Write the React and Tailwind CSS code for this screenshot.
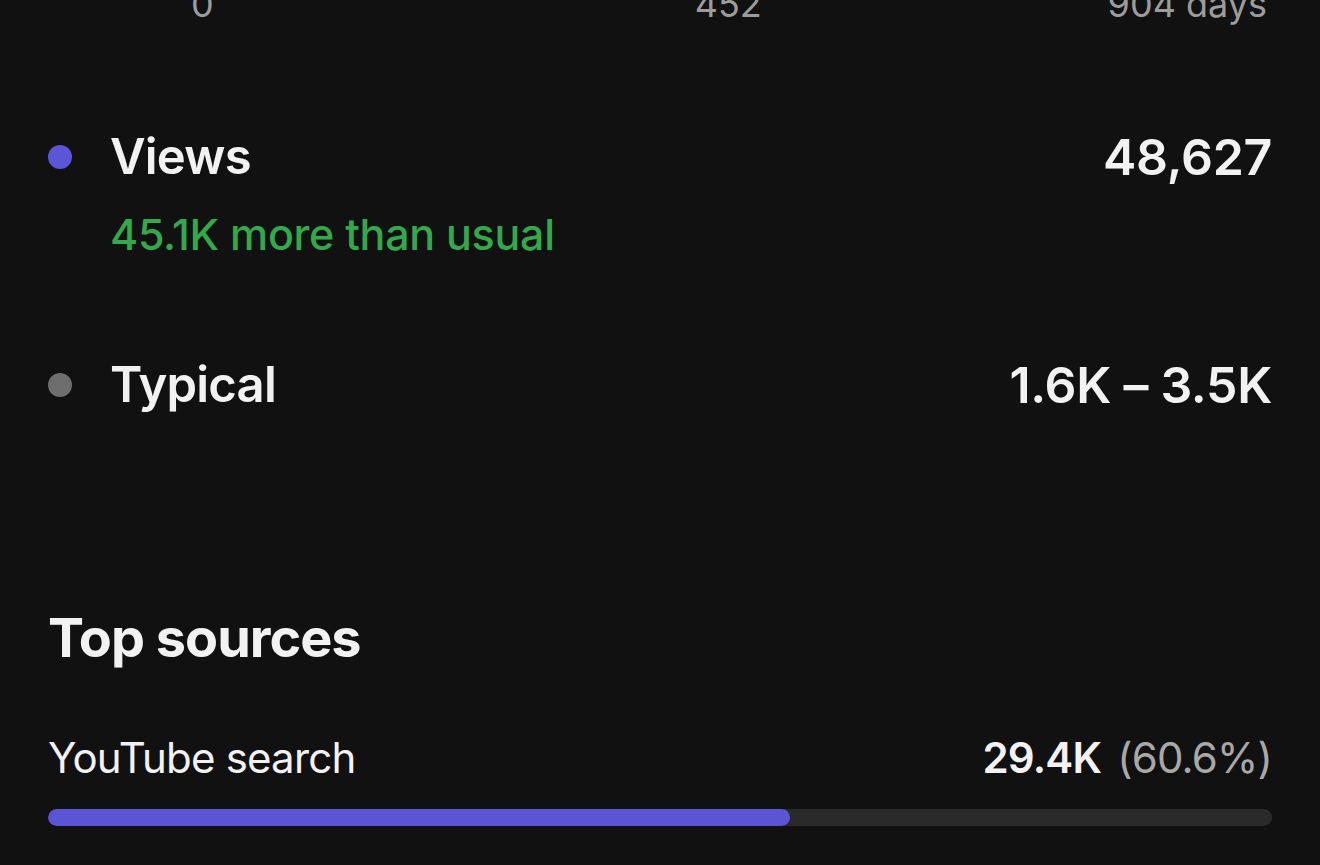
export default function App() {
  return (
    <div className="min-h-[865px] w-full overflow-hidden bg-[#111111] font-['Inter','Liberation_Sans',sans-serif] text-[#f2f2f2]">
      {/* chart x-axis labels (top cut off) */}
      <div className="-mt-[14px] flex h-[36px] items-center pr-[53px] text-[36px] leading-[36px] text-[#9c9c9c]">
        <span className="ml-[191px]">0</span>
        <span className="ml-[481px]">452</span>
        <span className="ml-auto">904 days</span>
      </div>

      <div className="px-[48px]">
        {/* Views */}
        <div className="mt-[105px] flex h-[60px] items-center justify-between">
          <div className="flex items-center">
            <span className="h-[24px] w-[24px] rounded-full bg-[#5b56d8]" />
            <span className="ml-[38px] text-[49px] font-semibold leading-[60px] tracking-[-0.8px]">Views</span>
          </div>
          <span className="text-[50px] font-semibold leading-[60px] tracking-[-0.3px]">48,627</span>
        </div>
        <div className="mt-[22px] h-[50px] pl-[62px] text-[43px] font-medium leading-[50px] tracking-[-0.3px] text-[#34a84c]">
          45.1K more than usual
        </div>

        {/* Typical */}
        <div className="mt-[96px] flex h-[60px] items-center justify-between">
          <div className="flex items-center">
            <span className="h-[24px] w-[24px] rounded-full bg-[#6e6e6e]" />
            <span className="ml-[38px] text-[49px] font-semibold leading-[60px] tracking-[-0.8px]">Typical</span>
          </div>
          <span className="text-[50px] font-semibold leading-[60px] tracking-[-0.3px]">1.6K – 3.5K</span>
        </div>

        {/* Top sources */}
        <h2 className="mt-[188px] h-[70px] text-[54px] font-bold leading-[70px] tracking-[-1px]">Top sources</h2>

        <div className="mt-[60px] flex h-[50px] items-center justify-between text-[42px] leading-[50px] tracking-[-0.8px]">
          <span>YouTube search</span>
          <span>
            <span className="font-semibold">29.4K</span>
            <span className="ml-[16px] text-[#a8a8a8]">(60.6%)</span>
          </span>
        </div>
        <div className="mt-[26px] h-[17px] w-full overflow-hidden rounded-full bg-[#2a2a2a]">
          <div className="h-full w-[60.6%] rounded-full bg-[#5b55d6]" />
        </div>
      </div>
    </div>
  );
}
